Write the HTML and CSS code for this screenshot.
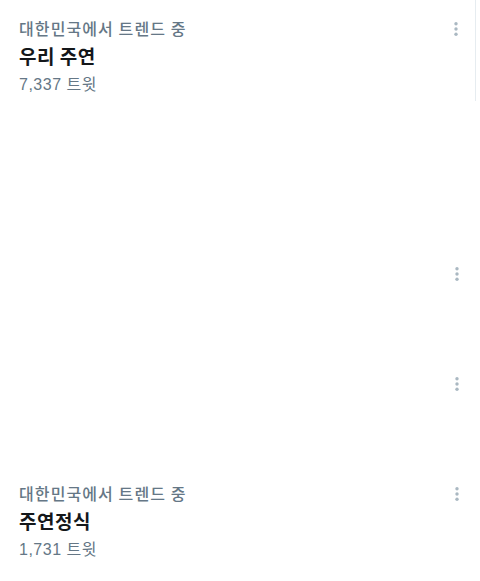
FILE: index.html
```html
<!DOCTYPE html>
<html>
<head>
    <title>트렌드</title>
    <link rel="stylesheet" href="styles.css">
</head>
<body>
    <div class="trends">
        <div class="trend first">
            <div class="info">
                <div class="meta">대한민국에서 트렌드 중</div>
                <div class="name">우리 주연</div>
                <div class="count">7,337 트윗</div>
            </div>
            <svg class="more" width="6" height="16" viewBox="0 0 6 16"><circle cx="3" cy="2.7" r="1.7"/><circle cx="3" cy="8" r="1.7"/><circle cx="3" cy="13.3" r="1.7"/></svg>
        </div>

        <div class="trend empty">
            <div class="info"></div>
            <svg class="more" width="6" height="16" viewBox="0 0 6 16"><circle cx="3" cy="2.7" r="1.7"/><circle cx="3" cy="8" r="1.7"/><circle cx="3" cy="13.3" r="1.7"/></svg>
        </div>

        <div class="trend empty">
            <div class="info"></div>
            <svg class="more" width="6" height="16" viewBox="0 0 6 16"><circle cx="3" cy="2.7" r="1.7"/><circle cx="3" cy="8" r="1.7"/><circle cx="3" cy="13.3" r="1.7"/></svg>
        </div>

        <div class="trend">
            <div class="info">
                <div class="meta">대한민국에서 트렌드 중</div>
                <div class="name">주연정식</div>
                <div class="count">1,731 트윗</div>
            </div>
            <svg class="more" width="6" height="16" viewBox="0 0 6 16"><circle cx="3" cy="2.7" r="1.7"/><circle cx="3" cy="8" r="1.7"/><circle cx="3" cy="13.3" r="1.7"/></svg>
        </div>
    </div>
</body>
</html>
```

FILE: styles.css
```css
body {
    margin: 0;
    background-color: #ffffff;
    font-family: "Noto Sans CJK KR", "Noto Sans", sans-serif;
}

.trends {
    width: 480px;
}

.trend {
    display: flex;
    justify-content: space-between;
    align-items: flex-start;
    padding: 14px 20px 0 19px;
    box-sizing: border-box;
    height: 110px;
}

.trend.first {
    width: 476px;
    height: 101px;
    padding-right: 16px;
    border-right: 1px solid #e6ecf0;
    margin-bottom: 144px;
}

.meta {
    font-size: 16px;
    font-weight: 500;
    line-height: 28px;
    letter-spacing: 1.1px;
    color: #657786;
}

.name {
    font-size: 19px;
    line-height: 28px;
    letter-spacing: 0.5px;
    font-weight: bold;
    color: #14171a;
}

.count {
    font-family: "Liberation Sans", "Noto Sans CJK KR", sans-serif;
    font-size: 16px;
    line-height: 29px;
    letter-spacing: 0.5px;
    color: #657786;
}

.more {
    fill: #aab8c2;
    margin-top: 7px;
}
```
